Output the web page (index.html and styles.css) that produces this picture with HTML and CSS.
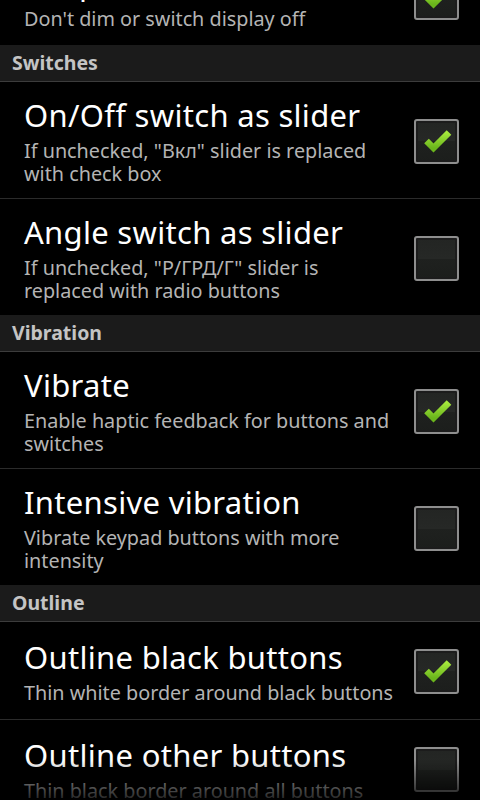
FILE: index.html
```html
<!DOCTYPE html>
<html>
<head>
<meta charset="utf-8">
<link rel="stylesheet" href="styles.css">
</head>
<body>
<div class="list">
  <section class="group">
    <div class="item">
      <div class="text">
        <div class="title">Keep screen on</div>
        <div class="summary">Don't dim or switch display off</div>
      </div>
      <div class="box checked"><svg viewBox="0 0 45 45" width="45" height="45"><defs><linearGradient id="g0" x1="0" y1="0" x2="0" y2="1"><stop offset="0" stop-color="#a6e83c"/><stop offset="1" stop-color="#6ab51c"/></linearGradient></defs><polyline points="12.5,22 19.5,29 35,13.5" fill="none" stroke="url(#g0)" stroke-width="6.5" stroke-linejoin="miter" stroke-linecap="butt"/></svg></div>
    </div>
  </section>

  <div class="header">Switches</div>
  <section class="group">
    <div class="item">
      <div class="text">
        <div class="title">On/Off switch as slider</div>
        <div class="summary">If unchecked, "Вкл" slider is replaced with check box</div>
      </div>
      <div class="box checked"><svg viewBox="0 0 45 45" width="45" height="45"><defs><linearGradient id="g1" x1="0" y1="0" x2="0" y2="1"><stop offset="0" stop-color="#a6e83c"/><stop offset="1" stop-color="#6ab51c"/></linearGradient></defs><polyline points="12.5,22 19.5,29 35,13.5" fill="none" stroke="url(#g1)" stroke-width="6.5" stroke-linejoin="miter" stroke-linecap="butt"/></svg></div>
    </div>
    <div class="item">
      <div class="text">
        <div class="title">Angle switch as slider</div>
        <div class="summary">If unchecked, "Р/ГРД/Г" slider is replaced with radio buttons</div>
      </div>
      <div class="box"></div>
    </div>
  </section>

  <div class="header">Vibration</div>
  <section class="group">
    <div class="item">
      <div class="text">
        <div class="title">Vibrate</div>
        <div class="summary">Enable haptic feedback for buttons and switches</div>
      </div>
      <div class="box checked"><svg viewBox="0 0 45 45" width="45" height="45"><defs><linearGradient id="g2" x1="0" y1="0" x2="0" y2="1"><stop offset="0" stop-color="#a6e83c"/><stop offset="1" stop-color="#6ab51c"/></linearGradient></defs><polyline points="12.5,22 19.5,29 35,13.5" fill="none" stroke="url(#g2)" stroke-width="6.5" stroke-linejoin="miter" stroke-linecap="butt"/></svg></div>
    </div>
    <div class="item">
      <div class="text">
        <div class="title">Intensive vibration</div>
        <div class="summary">Vibrate keypad buttons with more intensity</div>
      </div>
      <div class="box"></div>
    </div>
  </section>

  <div class="header">Outline</div>
  <section class="group">
    <div class="item">
      <div class="text">
        <div class="title">Outline black buttons</div>
        <div class="summary">Thin white border around black buttons</div>
      </div>
      <div class="box checked"><svg viewBox="0 0 45 45" width="45" height="45"><defs><linearGradient id="g3" x1="0" y1="0" x2="0" y2="1"><stop offset="0" stop-color="#a6e83c"/><stop offset="1" stop-color="#6ab51c"/></linearGradient></defs><polyline points="12.5,22 19.5,29 35,13.5" fill="none" stroke="url(#g3)" stroke-width="6.5" stroke-linejoin="miter" stroke-linecap="butt"/></svg></div>
    </div>
    <div class="item">
      <div class="text">
        <div class="title">Outline other buttons</div>
        <div class="summary">Thin black border around all buttons</div>
      </div>
      <div class="box"></div>
    </div>
  </section>
</div>
<div class="fade"></div>
</body>
</html>
```

FILE: styles.css
```css
html, body {
  margin: 0;
  padding: 0;
  background: #000;
}
body {
  width: 480px;
  height: 800px;
  overflow: hidden;
  font-family: "Noto Sans", "Open Sans", sans-serif;
}
.list {
  margin-top: -52px;
}
.header {
  height: 36px;
  background: #1b1b1b;
  border-bottom: 1px solid #3c3c3c;
  color: #c4c4c4;
  font-weight: bold;
  font-size: 19.5px;
  line-height: 36px;
  padding-left: 12px;
}
.item {
  box-sizing: border-box;
  min-height: 97px;
  display: flex;
  align-items: center;
  padding: 15px 21px 13px 24px;
}
.item + .item {
  border-top: 1px solid #2b2b2b;
}
.text {
  flex: 1;
  min-width: 0;
}
.title {
  color: #fff;
  font-size: 31px;
  letter-spacing: 0.3px;
  line-height: 36px;
  white-space: nowrap;
}
.summary {
  color: #b4b4b4;
  font-size: 19.8px;
  line-height: 23px;
  margin-top: 6px;
}
.box {
  box-sizing: border-box;
  flex: none;
  width: 45px;
  height: 45px;
  margin-left: 18px;
  border: 2px solid #8e8e8e;
  border-radius: 3px;
  background: linear-gradient(#232523, #262826 50%, #1f211f 50%, #1c1e1c);
  box-shadow: inset 0 0 0 2px #1c1c1c;
  position: relative;
}
.box svg {
  position: absolute;
  left: -2px;
  top: -2px;
}
.fade {
  position: fixed;
  left: 0;
  right: 0;
  bottom: 0;
  height: 40px;
  background: linear-gradient(rgba(0,0,0,0), rgba(0,0,0,0.8));
  pointer-events: none;
}
```
